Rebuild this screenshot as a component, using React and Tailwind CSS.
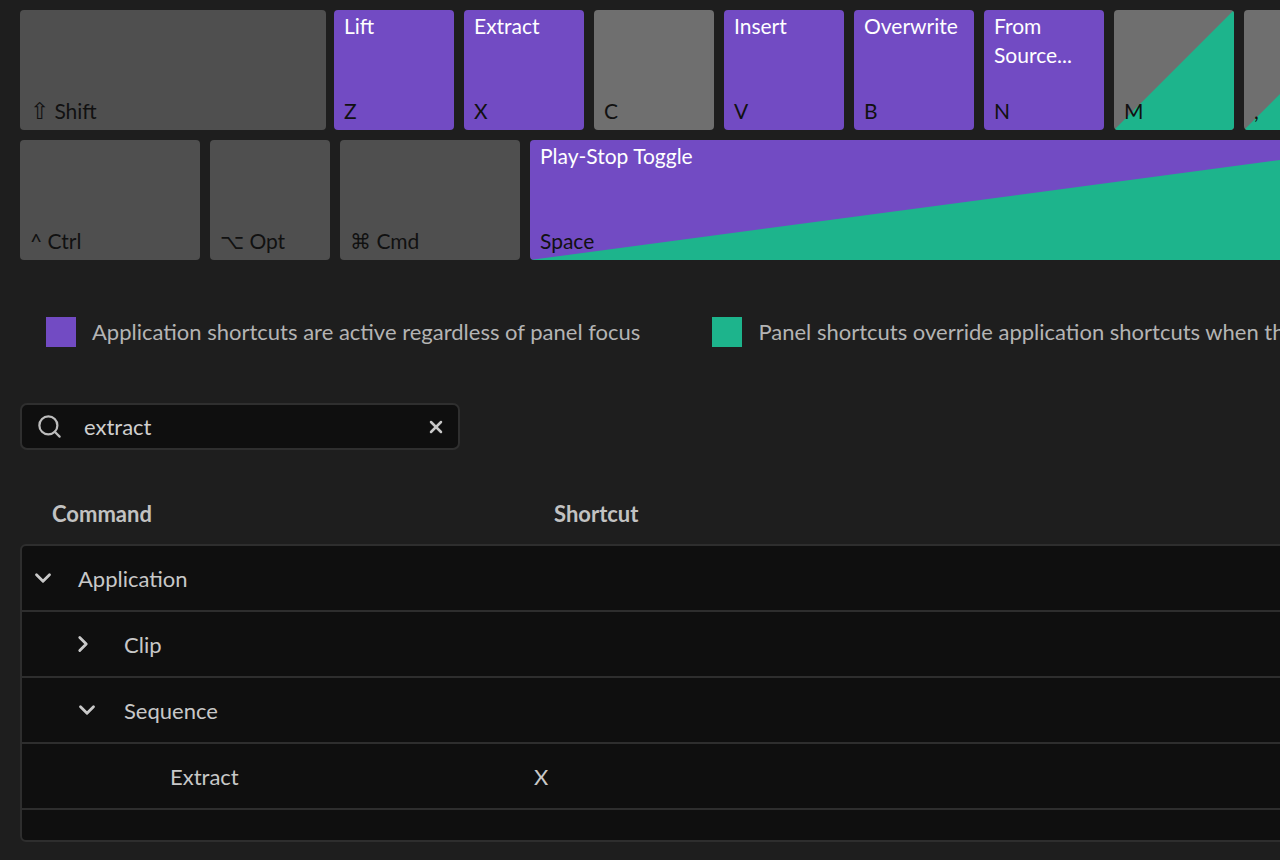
import { Search, X, ChevronDown, ChevronRight } from "lucide-react"

const FONT = { fontFamily: "Lato, 'Open Sans', sans-serif" }

function Key({ w = "w-[120px]", bg = "bg-[#4f4f4f]", top, bottom, split }) {
  return (
    <div className={`relative shrink-0 h-[120px] ${w} ${bg} rounded-[4px] overflow-hidden`}>
      {split && (
        <div className="absolute inset-0 bg-[#1db48c] [clip-path:polygon(0_100%,100%_0,100%_100%)]" />
      )}
      <div className="relative h-full flex flex-col justify-between px-[10px] pt-[1px] pb-[5px] text-[21px] leading-[29px]">
        <div className="text-white whitespace-pre-line">{top}</div>
        <div className="text-[#111]">{bottom}</div>
      </div>
    </div>
  )
}

// indent + icon column width are tuned per level
function Row({ indent, iconW, icon, label, shortcut }) {
  return (
    <div className="h-[66px] flex items-center text-[22px] text-[#c8c8c8] border-b-2 border-[#2e2e2e]">
      <div className={`${indent} flex items-center w-[512px] shrink-0`}>
        <span className={`${iconW} flex items-center shrink-0`}>{icon}</span>
        {label}
      </div>
      <div>{shortcut}</div>
    </div>
  )
}

export default function App() {
  const purple = "bg-[#724bc3]"
  return (
    <div className="w-[1280px] h-[860px] overflow-hidden bg-[#1e1e1e]" style={FONT}>
      <div className="pl-[20px] pt-[10px] flex flex-col gap-[10px]">
        <div className="flex gap-[10px]">
          <Key w="w-[306px] mr-[-2px]" bottom={<span><span className="text-[23px]">⇧</span> Shift</span>} />
          <Key bg={purple} top="Lift" bottom="Z" />
          <Key bg={purple} top="Extract" bottom="X" />
          <Key bg="bg-[#6f6f6f]" bottom="C" />
          <Key bg={purple} top="Insert" bottom="V" />
          <Key bg={purple} top="Overwrite" bottom="B" />
          <Key bg={purple} top={"From\nSource..."} bottom="N" />
          <Key bg="bg-[#6f6f6f]" bottom="M" split />
          <Key bg="bg-[#6f6f6f]" bottom="," split />
        </div>
        <div className="flex gap-[10px]">
          <Key w="w-[180px]" bottom="^ Ctrl" />
          <Key bottom="⌥ Opt" />
          <Key w="w-[180px]" bottom="⌘ Cmd" />
          <Key w="w-[900px]" bg={purple} top="Play-Stop Toggle" bottom="Space" split />
        </div>
      </div>

      <div className="flex items-center mt-[55px] pl-[46px] text-[22px] text-[#b4b4b4] whitespace-nowrap">
        <span className="w-[30px] h-[30px] bg-[#724bc3] mr-[16px] shrink-0" />
        <span>Application shortcuts are active regardless of panel focus</span>
        <span className="w-[30px] h-[30px] bg-[#1db48c] ml-[72px] mr-[16px] shrink-0" />
        <span>Panel shortcuts override application shortcuts when the panel has focus</span>
      </div>

      <div className="ml-[20px] mt-[55px] w-[440px] h-[47px] rounded-[7px] border-2 border-[#2f2f2f] bg-[#0f0f0f] flex items-center pl-[14px] pr-[12px]">
        <Search size={27} strokeWidth={2} className="text-[#bdbdbd]" />
        <span className="ml-[21px] text-[22px] text-[#cfcfcf] flex-1">extract</span>
        <X size={20} strokeWidth={3} className="text-[#c8c8c8]" />
      </div>

      <div className="flex mt-[48px] h-[30px] items-center text-[22px] font-bold text-[#c2c2c2]">
        <span className="ml-[52px] w-[502px]">Command</span>
        <span>Shortcut</span>
      </div>

      <div className="ml-[20px] mt-[16px] w-[1300px] h-[298px] rounded-l-[6px] border-2 border-[#2e2e2e] bg-[#0f0f0f] overflow-hidden">
        <Row indent="pl-[8px]" iconW="w-[48px]" icon={<ChevronDown size={26} strokeWidth={2.6} className="text-[#c8c8c8]" />} label="Application" />
        <Row indent="pl-[48px]" iconW="w-[54px]" icon={<ChevronRight size={26} strokeWidth={2.6} className="text-[#c8c8c8]" />} label="Clip" />
        <Row indent="pl-[52px]" iconW="w-[50px]" icon={<ChevronDown size={26} strokeWidth={2.6} className="text-[#c8c8c8]" />} label="Sequence" />
        <Row indent="pl-[104px]" iconW="w-[44px]" icon={null} label="Extract" shortcut="X" />
      </div>
    </div>
  )
}
